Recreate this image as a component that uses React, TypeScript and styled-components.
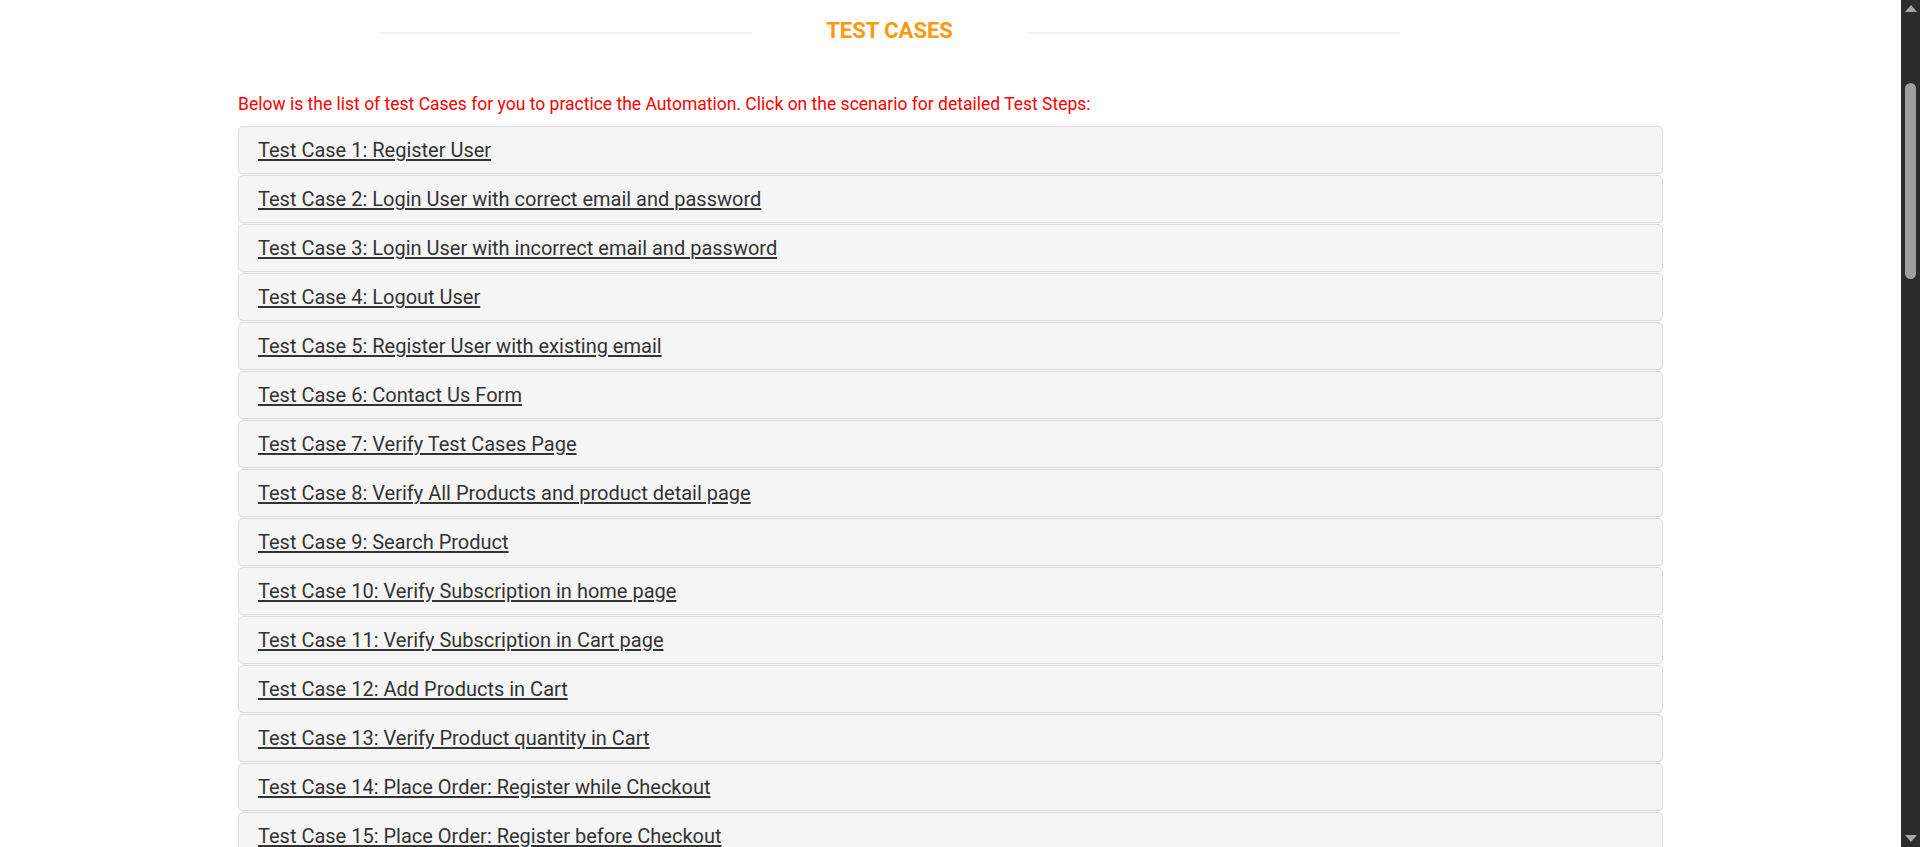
import React from "react";
import styled, { createGlobalStyle } from "styled-components";

const Global = createGlobalStyle`
  html, body { background: #ffffff; }
  body {
    margin: 0;
    font-family: Roboto, "Liberation Sans", Arial, sans-serif;
    color: #333333;
  }
  * { box-sizing: border-box; }
`;

const Viewport = styled.div`
  padding-right: 19px;
`;

const Page = styled.main`
  width: 1425px;
  margin: 0 auto;
  padding-bottom: 1900px;
`;

const TitleRow = styled.div`
  display: flex;
  align-items: flex-start;
  gap: 74px;
  width: 1021px;
  margin-left: 141px;
  padding-top: 17px;
`;

const TitleLine = styled.span`
  flex: 1;
  height: 2px;
  margin-top: 15px;
  background: #f2f2f2;
`;

const Title = styled.h2`
  margin: 0;
  font-size: 22px;
  line-height: 27px;
  font-weight: 700;
  color: #fe980f;
  text-transform: uppercase;
  white-space: nowrap;
`;

const Intro = styled.p`
  margin: 48px 0 9px 0;
  font-size: 17.5px;
  line-height: 25px;
  color: #ff0000;
`;

const Panel = styled.div`
  background: #f5f5f5;
  border: 1px solid #dddddd;
  border-radius: 5px;
  box-shadow: 0 1px 1px rgba(0, 0, 0, 0.05);
  margin-bottom: 1px;
  padding: 12px 19px;
`;

const CaseLink = styled.a`
  font-size: 20px;
  line-height: 22px;
  color: #333333;
  text-decoration: underline;
  text-underline-offset: 2px;
  cursor: pointer;
`;

/* browser scrollbar as seen in the picture, laid over the page edge */
const ScrollTrack = styled.div`
  position: fixed;
  top: 0;
  right: 0;
  width: 19px;
  height: 100vh;
  background: #2c2c2c;
  display: flex;
  flex-direction: column;
  align-items: center;
  padding: 5px 0;
`;

const ArrowUp = styled.span`
  width: 0;
  height: 0;
  border-left: 6px solid transparent;
  border-right: 6px solid transparent;
  border-bottom: 7px solid #a6a6a6;
`;

const ArrowDown = styled.span`
  width: 0;
  height: 0;
  margin-top: auto;
  border-left: 6px solid transparent;
  border-right: 6px solid transparent;
  border-top: 7px solid #a6a6a6;
`;

const ScrollThumb = styled.span`
  margin-top: 71px;
  width: 11px;
  height: 196px;
  border-radius: 6px;
  background: #9f9f9f;
`;

const cases = [
  "Register User",
  "Login User with correct email and password",
  "Login User with incorrect email and password",
  "Logout User",
  "Register User with existing email",
  "Contact Us Form",
  "Verify Test Cases Page",
  "Verify All Products and product detail page",
  "Search Product",
  "Verify Subscription in home page",
  "Verify Subscription in Cart page",
  "Add Products in Cart",
  "Verify Product quantity in Cart",
  "Place Order: Register while Checkout",
  "Place Order: Register before Checkout",
  "Place Order: Login before Checkout",
  "Remove Products From Cart",
  "View Category Products",
  "View & Cart Brand Products",
  "Search Products and Verify Cart After Login",
  "Add review on product",
  "Add to cart from Recommended items",
  "Verify address details in checkout page",
  "Download Invoice after purchase order",
  "Verify Scroll Up using 'Arrow' button and Scroll Down functionality",
  "Verify Scroll Up without 'Arrow' button and Scroll Down functionality",
];

export default function App() {
  return (
    <>
      <Global />
      <Viewport>
        <Page>
          <TitleRow>
            <TitleLine />
            <Title>Test Cases</Title>
            <TitleLine />
          </TitleRow>
          <Intro>
            Below is the list of test Cases for you to practice the Automation. Click on the scenario for
            detailed Test Steps:
          </Intro>
          {cases.map((c, i) => (
            <Panel key={i}>
              <CaseLink>{`Test Case ${i + 1}: ${c}`}</CaseLink>
            </Panel>
          ))}
        </Page>
      </Viewport>
      <ScrollTrack>
        <ArrowUp />
        <ScrollThumb />
        <ArrowDown />
      </ScrollTrack>
    </>
  );
}
